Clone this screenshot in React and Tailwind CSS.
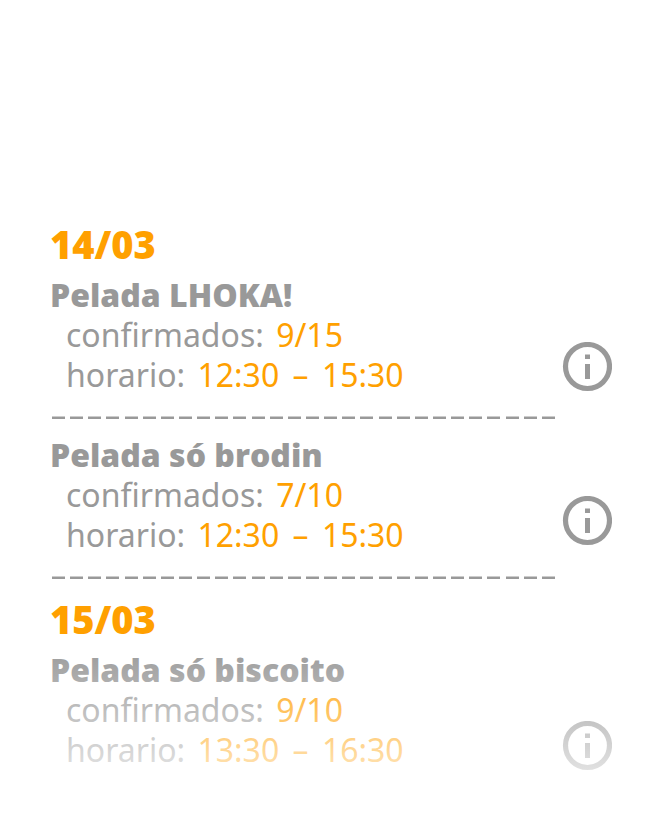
const days = [
  {
    date: "14/03",
    matches: [
      { name: "Pelada LHOKA!", confirmed: "9/15", start: "12:30", end: "15:30" },
      { name: "Pelada só brodin", confirmed: "7/10", start: "12:30", end: "15:30" },
    ],
  },
  {
    date: "15/03",
    matches: [
      { name: "Pelada só biscoito", confirmed: "9/10", start: "13:30", end: "16:30" },
    ],
  },
];

const dashes = Array.from({ length: 28 }, (_, i) => i);

function InfoButton({ label }) {
  return (
    <button type="button" aria-label={label} className="block size-[50px] text-[#999999]">
      <svg viewBox="0 0 50 50" className="size-full" fill="none" aria-hidden="true">
        <circle cx="25.5" cy="24.5" r="22" stroke="currentColor" strokeWidth="5.2" />
        <path d="M23 12.5h5v4.5h-5zM23 22h5v15h-5z" fill="currentColor" />
      </svg>
    </button>
  );
}

function Match({ match }) {
  return (
    <article className="h-40 text-[32px] leading-10">
      <h3 className="font-['Open_Sans',sans-serif] font-extrabold">{match.name}</h3>
      <p className="pl-4">
        confirmados: <span className="ml-1 text-[#ffa000]">{match.confirmed}</span>
      </p>
      <p className="pl-4">
        horario:{" "}
        <span className="ml-1 text-[#ffa000]">
          {match.start} <span className="mx-[5px]">–</span> {match.end}
        </span>
      </p>
    </article>
  );
}

function Divider() {
  return (
    <div role="separator" className="-mt-[19px] mr-px mb-4 ml-0.5 flex h-[3px] justify-between">
      {dashes.map((n) => (
        <span key={n} className="w-[13px] border-t border-[#cccccc] bg-[#999999]" />
      ))}
    </div>
  );
}

export default function App() {
  return (
    <main className="relative min-h-screen bg-white pt-[220px] font-['Noto_Sans',sans-serif] text-[#999999]">
      <div className="flex justify-between pr-[38px] pl-[50px]">
        <div className="w-[506px]">
          {days.map((day, i) => (
            <section key={day.date}>
              <h2 className="mb-[7px] font-['Open_Sans',sans-serif] text-[38px] leading-[48px] font-extrabold text-[#ffa000]">
                {day.date}
              </h2>
              {day.matches.map((match) => (
                <div key={match.name}>
                  <Match match={match} />
                  {i < days.length - 1 && <Divider />}
                </div>
              ))}
            </section>
          ))}
        </div>
        <div className="flex flex-col gap-[175px] pt-[122px]">
          {days.map((day) => (
            <div key={day.date} className="flex flex-col gap-[104px]">
              {day.matches.map((match) => (
                <InfoButton key={match.name} label={`Detalhes de ${match.name}`} />
              ))}
            </div>
          ))}
        </div>
      </div>
      <div className="pointer-events-none absolute inset-x-0 bottom-0 h-[188px] bg-[linear-gradient(to_bottom,transparent,white_178px)]" />
    </main>
  );
}
